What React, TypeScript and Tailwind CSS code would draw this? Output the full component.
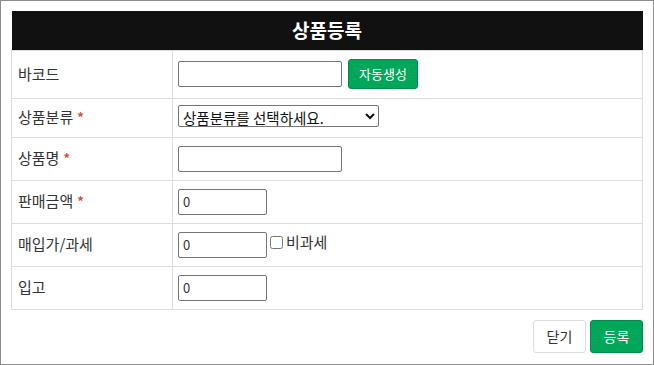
import React from 'react';

const font = { fontFamily: '"Noto Sans CJK KR", "Noto Sans", sans-serif' };

const Req = () => <span className="ml-[4px] text-[13px] font-bold text-[#dd4b39] relative -top-[1px]">*</span>;

export default function App() {
  return (
    <div
      className="w-[654px] h-[365px] border border-[#8c8c8c] bg-white px-[10px] pt-[10px] text-[#333]"
      style={font}
    >
      <table className="w-full border-collapse text-[15px]">
        <thead>
          <tr>
            <th colSpan={2} className="h-[39px] bg-[#111] text-white text-[19px] font-bold text-center">
              상품등록
            </th>
          </tr>
        </thead>
        <tbody>
          <tr className="h-[48px]">
            <td className="w-[161px] border border-[#ddd] px-[6px]">바코드</td>
            <td className="border border-[#ddd] px-[5px]">
              <div className="flex items-center gap-[6px]">
                <input className="w-[164px] h-[26px] border border-[#767676] rounded-[2px] px-1" />
                <button className="w-[70px] h-[30px] bg-[#00a65a] border border-[#008d4c] rounded-[3px] text-white text-[13px]">
                  자동생성
                </button>
              </div>
            </td>
          </tr>
          <tr className="h-[39px]">
            <td className="border border-[#ddd] px-[6px]">상품분류<Req /></td>
            <td className="border border-[#ddd] px-[5px]">
              <select className="w-[201px] h-[22px] border border-[#767676] rounded-[2px] text-[14.5px] text-[#111] bg-white">
                <option>상품분류를 선택하세요.</option>
              </select>
            </td>
          </tr>
          <tr className="h-[43px]">
            <td className="border border-[#ddd] px-[6px]">상품명<Req /></td>
            <td className="border border-[#ddd] px-[5px]">
              <input className="block w-[164px] h-[26px] border border-[#767676] rounded-[2px] px-1" />
            </td>
          </tr>
          <tr className="h-[43px]">
            <td className="border border-[#ddd] px-[6px]">판매금액<Req /></td>
            <td className="border border-[#ddd] px-[5px]">
              <input defaultValue="0" className="block w-[89px] h-[26px] border border-[#767676] rounded-[2px] px-[4px] text-[13px]" />
            </td>
          </tr>
          <tr className="h-[43px]">
            <td className="border border-[#ddd] px-[6px]">매입가/과세</td>
            <td className="border border-[#ddd] px-[5px]">
              <div className="flex items-center">
                <input defaultValue="0" className="w-[89px] h-[26px] border border-[#767676] rounded-[2px] px-[4px] text-[13px]" />
                <label className="flex items-center -mt-[4px] ml-[3px]">
                  <input type="checkbox" className="w-[13px] h-[13px] m-0 mr-[3px]" />
                  <span>비과세</span>
                </label>
              </div>
            </td>
          </tr>
          <tr className="h-[43px]">
            <td className="border border-[#ddd] px-[6px]">입고</td>
            <td className="border border-[#ddd] px-[5px]">
              <input defaultValue="0" className="block w-[89px] h-[26px] border border-[#767676] rounded-[2px] px-[4px] text-[13px]" />
            </td>
          </tr>
        </tbody>
      </table>
      <div className="flex justify-end gap-[4px] mt-[10px]">
        <button className="w-[53px] h-[33px] border border-[#ddd] rounded-[3px] bg-white text-[14px] text-[#333]">닫기</button>
        <button className="w-[53px] h-[33px] border border-[#008d4c] rounded-[3px] bg-[#00a65a] text-[14px] text-white">등록</button>
      </div>
    </div>
  );
}
